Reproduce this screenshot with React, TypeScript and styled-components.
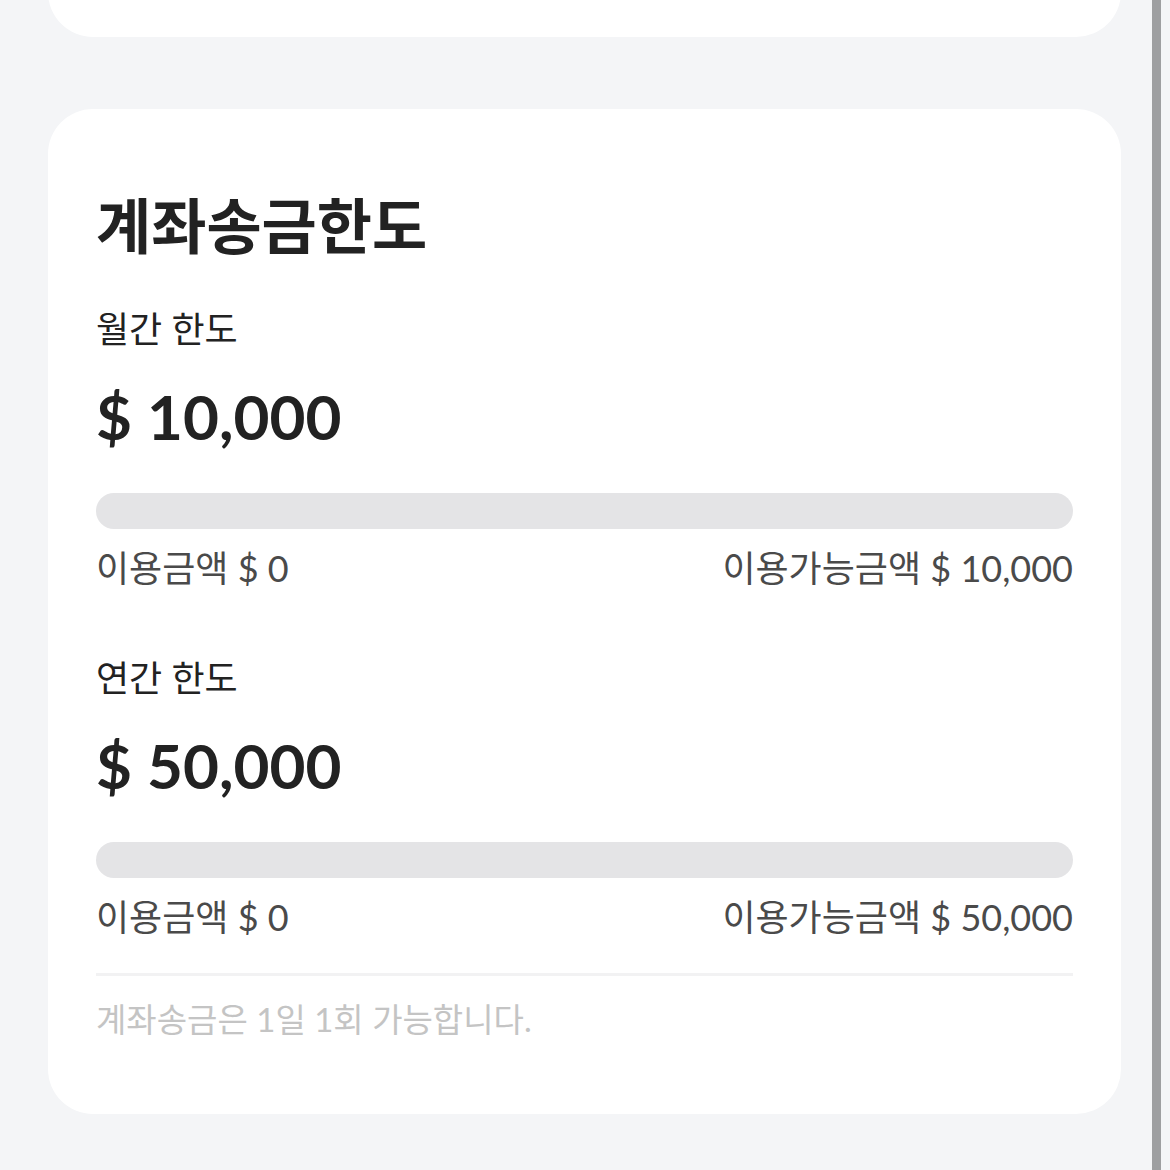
import { createGlobalStyle, styled } from "styled-components";

const GlobalStyle = createGlobalStyle`
  html, body {
    margin: 0;
    padding: 0;
    background: #f4f5f7;
    overflow: hidden;
  }
  body {
    font-family: Lato, "Noto Sans CJK KR", sans-serif;
    color: #222222;
  }
`;

const Page = styled.div`
  display: flex;
  flex-direction: column;
  gap: 72px;
  padding: 0 49px 72px 48px;
`;

const TopCard = styled.div`
  height: 120px;
  margin-top: -83px;
  background: #ffffff;
  border-radius: 45px;
`;

const Card = styled.section`
  background: #ffffff;
  border-radius: 45px;
  padding: 72px 48px 72px;
`;

const Title = styled.h2`
  margin: 0;
  font-size: 60px;
  line-height: 90px;
  font-weight: 700;
  color: #222222;
`;

const Block = styled.div`
  margin-top: ${(p: { $first?: boolean }) => (p.$first ? "31px" : "59px")};
`;

const Label = styled.div`
  font-size: 36px;
  line-height: 54px;
  color: #222222;
`;

const Amount = styled.div`
  margin-top: 18px;
  font-size: 62px;
  line-height: 84px;
  font-weight: 700;
  color: #222222;
`;

const Track = styled.div`
  margin-top: 35px;
  height: 36px;
  border-radius: 18px;
  background: #e4e4e6;
  overflow: hidden;
`;

const Fill = styled.div`
  height: 100%;
  background: #3b6ef5;
`;

const UsageRow = styled.div`
  margin-top: 15px;
  display: flex;
  justify-content: space-between;
  font-size: 36px;
  line-height: 48px;
  color: #4a4a4a;
`;

const Divider = styled.hr`
  margin: 32px 0 0;
  border: none;
  height: 3px;
  background: #f2f2f3;
`;

const Note = styled.p`
  margin: 21px 0 0;
  font-size: 33px;
  line-height: 45px;
  color: #c4c4c4;
`;

const Scrollbar = styled.div`
  position: fixed;
  top: 0;
  bottom: 0;
  right: 9px;
  width: 9px;
  background: #9e9fa1;
`;

const limits = [
  { label: "월간 한도", limit: 10000, used: 0 },
  { label: "연간 한도", limit: 50000, used: 0 },
];

const fmt = (n: number) => n.toLocaleString("en-US");

const App = () => {
  return (
    <>
      <GlobalStyle />
      <Page>
        <TopCard />
        <Card>
          <Title>계좌송금한도</Title>
          {limits.map((l, i) => (
            <Block key={l.label} $first={i === 0}>
              <Label>{l.label}</Label>
              <Amount>$ {fmt(l.limit)}</Amount>
              <Track>
                <Fill style={{ width: `${(l.used / l.limit) * 100}%` }} />
              </Track>
              <UsageRow>
                <span>이용금액 $ {fmt(l.used)}</span>
                <span>이용가능금액 $ {fmt(l.limit - l.used)}</span>
              </UsageRow>
            </Block>
          ))}
          <Divider />
          <Note>계좌송금은 1일 1회 가능합니다.</Note>
        </Card>
      </Page>
      <Scrollbar />
    </>
  );
};

export default App;
